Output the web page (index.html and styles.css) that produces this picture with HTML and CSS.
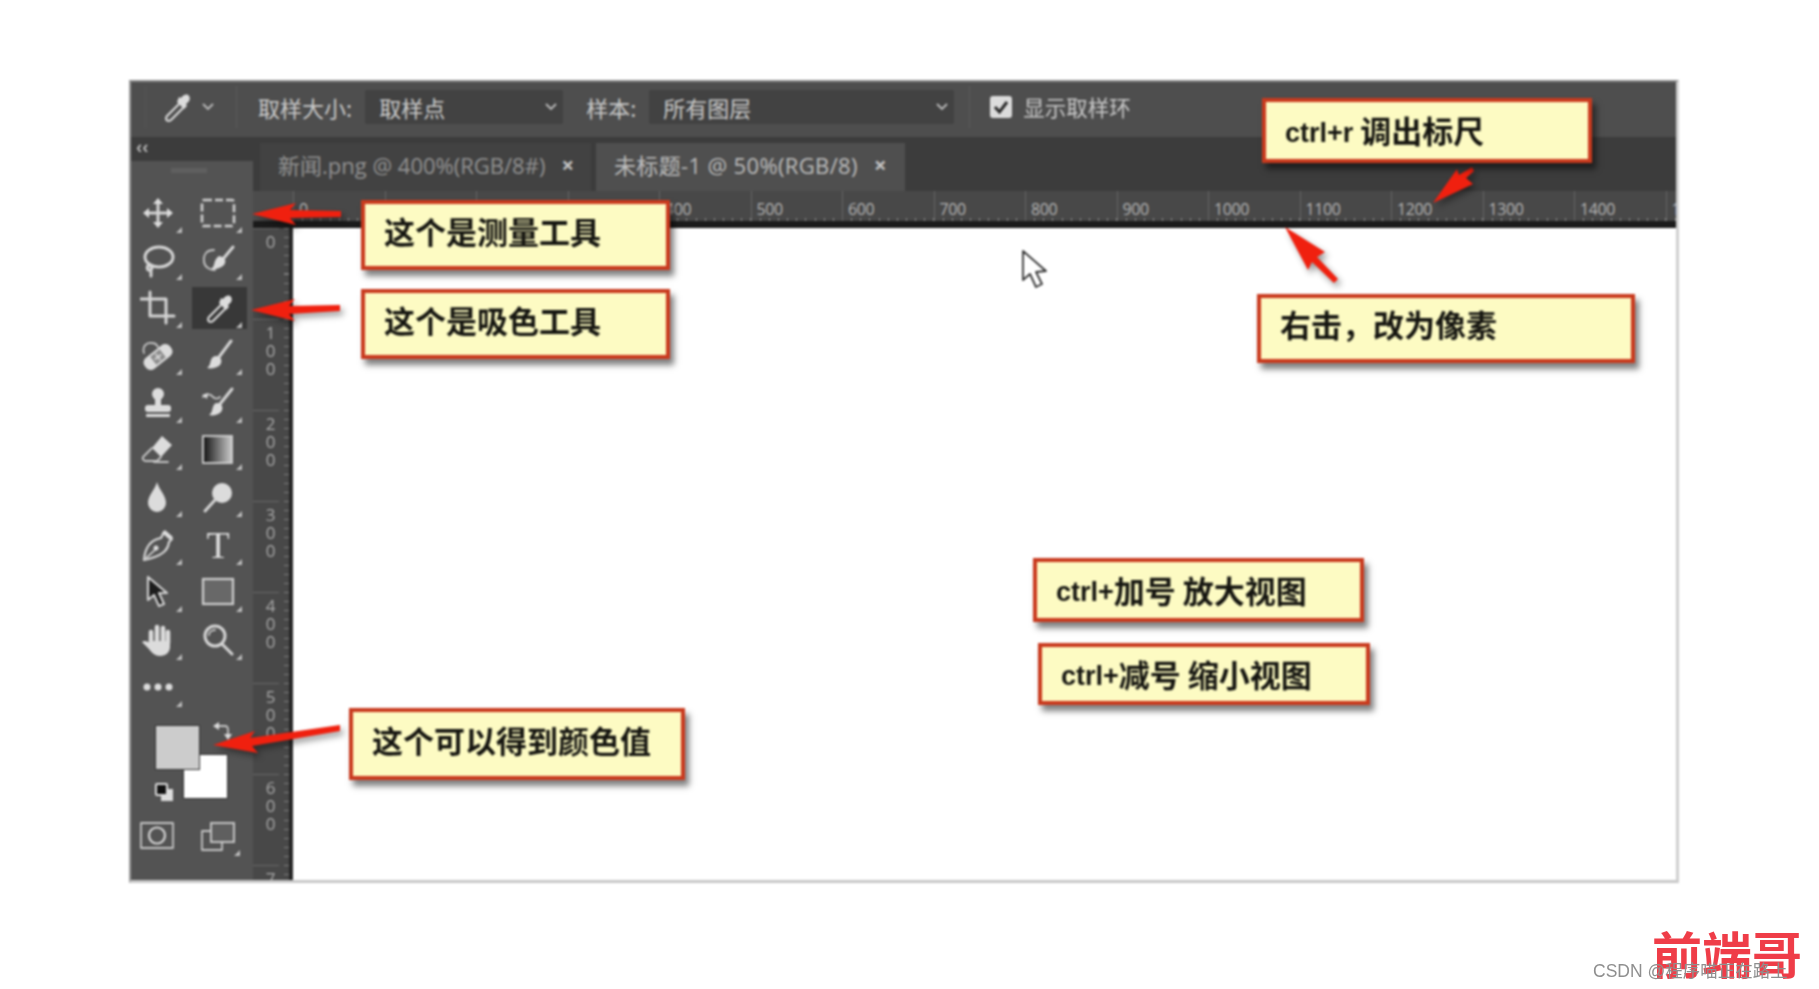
FILE: index.html
```html
<!DOCTYPE html>
<html lang="zh-CN">
<head>
<meta charset="utf-8">
<title>标尺与取色</title>
<link rel="stylesheet" href="styles.css">
</head>
<body>
<div class="soft">
<main class="window">
  <header class="options">
    <div class="opt-tool">
      <svg class="ic" viewBox="0 0 36 36"><path class="ln2" d="M20 14L7 27c-2 2-1 5 2 5 1 0 2-1 3-2L25 17"/><path class="fl" d="M17 13l7 7 3-3-1-2c3-2 5-5 3-8s-6-1-8 2l-2-1z"/></svg>
      <svg class="chev" viewBox="0 0 12 8"><path d="M1 1l5 5 5-5"/></svg>
    </div>
    <span class="opt-label first">取样大小:</span>
    <div class="select s1"><span>取样点</span><svg class="chev" viewBox="0 0 12 8"><path d="M1 1l5 5 5-5"/></svg></div>
    <span class="opt-label second">样本:</span>
    <div class="select s2"><span>所有图层</span><svg class="chev" viewBox="0 0 12 8"><path d="M1 1l5 5 5-5"/></svg></div>
    <div class="check"><svg viewBox="0 0 24 24"><rect class="cb" x="1" y="1" width="22" height="22" rx="3"/><path class="ck" d="M6 12l4.500 5L18 7"/></svg><span class="opt-label check-label">显示取样环</span></div>
  </header>

  <div class="main">
    <aside class="toolbar">
      <div class="tb-head"><span>‹‹</span></div>
      <div class="grip"></div>
      <div class="tools">
        <div class="tool"><svg class="ic" viewBox="0 0 36 36"><path class="ln" d="M18 6v24M6 18h24"/><path class="fl" d="M18 3l5 6H13zM18 33l5-6H13zM3 18l6-5v10zM33 18l-6-5v10z"/></svg></div>
        <div class="tool"><svg class="ic" viewBox="0 0 36 36"><rect class="dash" x="2" y="5" width="32" height="26" rx="2"/></svg></div>
        <div class="tool"><svg class="ic" viewBox="0 0 36 36"><ellipse class="ln" cx="19" cy="14" rx="14" ry="10"/><path class="ln" d="M9 21c-3 3-2 7 1 6s2-4 0-4M11 27v6"/></svg></div>
        <div class="tool"><svg class="ic" viewBox="0 0 36 36"><path class="ln1" d="M14 7C7 7 3 11 4 19c1 6 7 8 11 8"/><path class="ln" d="M33 4L23 16"/><path class="fl" d="M19 13c6 1 8 5 5 9-3 3-9 5-13 4 3-2 3-5 4-8 1-2 2-4 4-5z"/></svg></div>
        <div class="tool"><svg class="ic" viewBox="0 0 36 36"><path class="ln" d="M1 9h25v24M10 2v24h24"/></svg></div>
        <div class="tool active"><svg class="ic" viewBox="0 0 36 36"><path class="ln2" d="M20 14L7 27c-2 2-1 5 2 5 1 0 2-1 3-2L25 17"/><path class="fl" d="M17 13l7 7 3-3-1-2c3-2 5-5 3-8s-6-1-8 2l-2-1z"/></svg></div>
        <div class="tool"><svg class="ic" viewBox="0 0 36 36"><path class="ln1" d="M4 16c-2-6 2-11 8-10 3 0 5 2 6 4"/><g transform="rotate(-38 18 20)"><rect class="fl" x="2" y="13" width="32" height="14" rx="6"/><rect class="hole" x="12" y="15" width="12" height="10"/><path class="grid" d="M14 20h8M18 16v8"/></g></svg></div>
        <div class="tool"><svg class="ic" viewBox="0 0 36 36"><path class="ln" d="M31 4L19 20"/><path class="fl" d="M16 19c5 0 7 5 4 9-3 3-9 4-13 3 3-2 3-5 4-8 1-3 3-4 5-4z"/></svg></div>
        <div class="tool"><svg class="ic" viewBox="0 0 36 36"><circle class="fl" cx="18" cy="9" r="6"/><rect class="fl" x="15" y="13" width="6" height="8"/><rect class="fl" x="5" y="20" width="26" height="7" rx="3"/><rect class="fl" x="6" y="29" width="24" height="3" rx="1"/></svg></div>
        <div class="tool"><svg class="ic" viewBox="0 0 36 36"><path class="ln" d="M32 4L20 19"/><path class="fl" d="M17 18c5 0 7 5 4 9-3 3-8 4-12 3 3-2 3-5 4-8 1-3 2-4 4-4z"/><path class="ln1" d="M3 12c3-4 8-3 10 0 2 2 5 2 7 0"/><path class="fl" d="M2 10l6-2-1 6z"/></svg></div>
        <div class="tool"><svg class="ic" viewBox="0 0 36 36"><path class="fl" d="M22 4l10 9-11 12-9-9z"/><path class="ln1" d="M12 16L3 25c-1 2 0 3 2 4h12l4-4M14 30h14"/></svg></div>
        <div class="tool"><svg class="ic" viewBox="0 0 36 36"><defs><linearGradient id="gr" x1="0" x2="1" y1="0" y2="0"><stop offset="0" stop-color="#111"/><stop offset="1" stop-color="#ccc"/></linearGradient></defs><rect class="grad" x="3" y="4" width="29" height="27"/></svg></div>
        <div class="tool"><svg class="ic" viewBox="0 0 36 36"><path class="fl" d="M17 2c2 8 9 13 9 21a9 9 0 0 1-18 0c0-8 7-13 9-21z"/></svg></div>
        <div class="tool"><svg class="ic" viewBox="0 0 36 36"><circle class="fl" cx="22" cy="13" r="10"/><path class="ln" d="M15 20L5 31"/></svg></div>
        <div class="tool"><svg class="ic" viewBox="0 0 36 36"><path class="ln2" d="M24 5l8 7-3 3c-1 8-6 14-25 18 1-13 6-20 17-22z"/><path class="ln1" d="M5 32l11-10"/><circle class="fl" cx="16" cy="21" r="2.500"/><path class="fl" d="M25 3l8 7-3 3-8-7z"/></svg></div>
        <div class="tool"><svg class="ic" viewBox="0 0 36 36"><text class="glyph" x="18" y="31">T</text></svg></div>
        <div class="tool"><svg class="ic" viewBox="0 0 36 36"><path class="arrow" d="M8 3v23l6-5 5 11 5-2-5-11h8z"/></svg></div>
        <div class="tool"><svg class="ic" viewBox="0 0 36 36"><rect class="shape" x="3" y="5" width="30" height="25"/></svg></div>
        <div class="tool"><svg class="ic" viewBox="0 0 36 36"><path class="fl" d="M10 19h20v6c0 5-4 9-10 9-5 0-8-3-11-7l-7-7c2-2 5-1 8 1z"/><path class="fing" d="M11 21V10M17 20V5M23 20V6M28 21V10"/></svg></div>
        <div class="tool"><svg class="ic" viewBox="0 0 36 36"><circle class="ln" cx="15" cy="14" r="10"/><path class="ln1" d="M9 13c0-3 3-5 6-5"/><path class="ln" d="M22 22l10 10"/></svg></div>
        <div class="tool"><svg class="ic" viewBox="0 0 36 36"><circle class="fl" cx="7" cy="18" r="3.500"/><circle class="fl" cx="18" cy="18" r="3.500"/><circle class="fl" cx="29" cy="18" r="3.500"/></svg></div>
      </div>
      <div class="colors">
        <div class="bg-swatch"></div>
        <div class="fg-swatch"></div>
        <svg class="swap" viewBox="0 0 20 20"><path class="ln1" d="M4 5h9c2 0 3 2 3 4v6"/><path class="fl" d="M1 5l6-4v8zM12 13h8l-4 6z"/></svg>
        <div class="def-back"></div>
        <div class="def-front"></div>
      </div>
      <div class="modes">
        <svg class="ic mask" viewBox="0 0 36 36"><rect class="ln1" x="2" y="5" width="32" height="25"/><circle class="ln2" cx="18" cy="17.500" r="8"/></svg>
        <div class="mode-r"><svg class="ic" viewBox="0 0 36 36"><rect class="ln1" x="2" y="13" width="20" height="19"/><rect class="scr" x="11" y="5" width="23" height="19"/></svg></div>
      </div>
    </aside>

    <section class="doc">
      <nav class="tabs">
        <div class="tab off"><span class="tab-t">新闻.png @ 400%(RGB/8#)</span><b>×</b></div>
        <div class="tab on"><span class="tab-t">未标题-1 @ 50%(RGB/8)</span><b>×</b></div>
      </nav>
      <div class="hrule-row">
        <div class="corner"></div>
        <div class="hrule">
          <span>0</span><span>100</span><span>200</span><span>300</span><span>400</span><span>500</span><span>600</span><span>700</span><span>800</span><span>900</span><span>1000</span><span>1100</span><span>1200</span><span>1300</span><span>1400</span><span>1</span>
        </div>
      </div>
      <div class="work">
        <div class="vrule">
          <span>0</span><span>100</span><span>200</span><span>300</span><span>400</span><span>500</span><span>600</span><span>7</span>
        </div>
        <div class="canvas"></div>
      </div>
    </section>
  </div>
</main>

<svg class="overlay" viewBox="0 0 1819 989">
  <g class="arrows">
    <polygon points="252,214 296,203 290,210 341,211 341,217 290,218 296,225"/>
    <polygon points="251,310 295,299 289,306 340,305 340,311 289,314 295,321"/>
    <polygon points="213,745 255,731 250,738 340,725 340,731 252,746 258,753"/>
    <polygon points="1433,203 1457,169 1459,175 1472,167 1474,171 1466,178 1473,184"/>
    <polygon points="1285,227 1325,252 1317,257 1338,279 1334,283 1312,262 1308,270"/>
  </g>
  <path class="cursor" d="M1023 251v29l7-6 6 13 6-3-6-12 10-1z"/>
</svg>

<div class="callout c1">这个是测量工具</div>
<div class="callout c2">这个是吸色工具</div>
<div class="callout c3">这个可以得到颜色值</div>
<div class="callout c4"><span class="lat">ctrl+r</span>&nbsp;调出标尺</div>
<div class="callout c5">右击，改为像素</div>
<div class="callout c6"><span class="lat">ctrl+</span>加号 放大视图</div>
<div class="callout c7"><span class="lat">ctrl+</span>减号 缩小视图</div>
</div>

<div class="mark-cn">前端哥</div>
<div class="mark-csdn">CSDN @程序喵正在路上</div>
</body>
</html>
```
FILE: styles.css
```css
html, body { margin: 0; padding: 0; background: #fff; }
body { width: 1819px; height: 989px; overflow: hidden; position: relative; font-family: "Liberation Sans", "Noto Sans CJK SC", sans-serif; }
.soft { filter: blur(0.9px); width: 1819px; height: 989px; }

.window { width: 1550px; height: 803px; margin: 0 0 0 129px; position: relative; top: 80px; box-sizing: border-box; border-right: 3px solid #cfcfcf; border-bottom: 3px solid #c8c8c8; border-left: 2px solid #9a9a9a; border-top: 2px solid #8a8a8a; display: flex; flex-direction: column; background: #535353; }

/* options bar */
.options { height: 55px; flex: none; box-sizing: border-box; padding-bottom: 5px; background: #4e4e4e; display: flex; align-items: center; color: #c9c9c9; font-family: "Noto Sans CJK SC", sans-serif; font-size: 22px; }
.opt-tool { display: flex; align-items: center; width: 92px; height: 42px; margin-left: 14px; box-sizing: border-box; padding-left: 14px; border-left: 1px solid #555; border-right: 1px solid #5a5a5a; gap: 6px; }
.opt-label { white-space: nowrap; line-height: 1; }
.first { margin-left: 21px; }
.second { margin-left: 23px; }
.select { height: 34px; background: #424242; border-radius: 2px; display: flex; align-items: center; justify-content: space-between; box-sizing: border-box; padding: 0 6px 0 14px; }
.s1 { width: 198px; margin-left: 13px; }
.s2 { width: 305px; margin-left: 13px; }
.chev { width: 12px; height: 8px; fill: none; stroke: #bbb; stroke-width: 1.8; }
.check { display: flex; align-items: center; margin-left: 15px; padding-left: 19px; height: 42px; border-left: 1px solid #5a5a5a; gap: 10px; }
.check svg { width: 24px; height: 24px; }
.check-label { font-size: 21.500px; }
.cb { fill: #dcdcdc; }
.ck { fill: none; stroke: #2a2a2a; stroke-width: 3; }

/* shared icon styles */
.ic { width: 36px; height: 36px; display: block; }
.ln { fill: none; stroke: #d4d4d4; stroke-width: 3; stroke-linecap: round; stroke-linejoin: round; }
.ln1 { fill: none; stroke: #c4c4c4; stroke-width: 1.8; stroke-linecap: round; stroke-linejoin: round; }
.ln2 { fill: none; stroke: #d6d6d6; stroke-width: 2.2; stroke-linejoin: round; }
.fl { fill: #dcdcdc; }
.dash { fill: none; stroke: #cfcfcf; stroke-width: 2.6; stroke-dasharray: 8 3; }
.hole { fill: #8d8d8d; }
.grid { fill: none; stroke: #dedede; stroke-width: 1.500; }
.grad { fill: url(#gr); stroke: #d2d2d2; stroke-width: 1.800; }
.glyph { font-family: "Liberation Serif", serif; font-size: 38px; fill: #dedede; text-anchor: middle; }
.arrow { fill: #1c1c1c; stroke: #cfcfcf; stroke-width: 2.200; stroke-linejoin: round; }
.shape { fill: #686868; stroke: #cfcfcf; stroke-width: 2.200; }
.fing { fill: none; stroke: #dcdcdc; stroke-width: 4.500; stroke-linecap: round; }
.scr { fill: #5f5f5f; stroke: #cfcfcf; stroke-width: 1.800; }

/* main area */
.main { flex: 1; display: flex; min-height: 0; }
.toolbar { width: 122px; flex: none; background: #535353; display: flex; flex-direction: column; }
.tb-head { height: 24px; flex: none; background: #3c3c3c; color: #b5b5b5; font-size: 19px; line-height: 19px; padding-left: 5px; font-weight: 700; }
.grip { width: 36px; height: 5px; background: #5f5f5f; margin: 7px 0 0 40px; flex: none; }
.tools { display: grid; grid-template-columns: 60px 60px; grid-auto-rows: 47.4px; margin: 16.6px 0 0 -3px; flex: none; }
.tool { position: relative; display: flex; align-items: center; justify-content: center; }
.tool::after { content: ""; position: absolute; right: 6px; bottom: 4px; border-style: solid; border-width: 0 0 6px 6px; border-color: transparent transparent #bdbdbd transparent; }
.tool.active { background: #383838; background-clip: content-box; padding: 3px 1px 3px 4px; box-sizing: border-box; }
.colors { position: relative; height: 92px; margin-top: 6px; flex: none; }
.fg-swatch { position: absolute; left: 24px; top: 8px; width: 45px; height: 45px; background: #cccccc; border: 1px solid #333; box-sizing: border-box; }
.bg-swatch { position: absolute; left: 52px; top: 37px; width: 45px; height: 45px; background: #fff; border: 1px solid #333; box-sizing: border-box; }
.swap { position: absolute; left: 81px; top: 4px; width: 20px; height: 20px; }
.def-back { position: absolute; left: 30px; top: 72px; width: 12px; height: 12px; background: #ddd; }
.def-front { position: absolute; left: 24px; top: 66px; width: 13px; height: 13px; background: #111; border: 2px solid #ddd; box-sizing: border-box; border-radius: 2px; }
.modes { display: flex; align-items: center; margin-top: 9px; padding-left: 8px; gap: 25px; flex: none; }
.mode-r { position: relative; }
.mode-r::after { content: ""; position: absolute; right: -4px; bottom: -2px; border-style: solid; border-width: 0 0 6px 6px; border-color: transparent transparent #bdbdbd transparent; }

/* document */
.doc { flex: 1; min-width: 0; display: flex; flex-direction: column; }
.tabs { height: 54px; flex: none; background: #3c3c3c; display: flex; align-items: flex-end; padding-left: 7px; gap: 5px; color: #929292; font-size: 22px; font-family: "Open Sans", "Noto Sans CJK SC", sans-serif; }
.tab { height: 48px; display: flex; align-items: center; box-sizing: border-box; white-space: nowrap; padding-bottom: 6px; }
.tab b { font-size: 22px; font-weight: 700; color: #c4c4c4; }
.off { width: 331px; background: #424242; padding-left: 18px; gap: 16px; }
.on { width: 309px; background: #4f4f4f; padding-left: 18px; gap: 16px; color: #bdbdbd; }
.on .tab-t { letter-spacing: 0.35px; }
.hrule-row { height: 37px; flex: none; display: flex; background: #484848; border-bottom: 7px solid #1b1b1b; box-sizing: border-box; }
.corner { width: 40px; flex: none; background: #4c4c4c; }
.hrule { flex: 1; min-width: 0; display: flex; overflow: hidden; background-image: repeating-linear-gradient(90deg, #8a8a8a 0 1px, transparent 1px 9.15px); background-size: 100% 3px; background-position: 0 100%; background-repeat: no-repeat; }
.hrule span { flex: none; width: 91.500px; box-sizing: border-box; border-left: 1px solid #666; padding-left: 5px; color: #b5b5b5; font-family: "Open Sans", sans-serif; font-size: 16px; line-height: 37px; letter-spacing: -0.4px; }
.work { flex: 1; min-height: 0; display: flex; }
.vrule { width: 40px; flex: none; background-color: #484848; border-right: 4px solid #262626; box-sizing: border-box; overflow: hidden; background-image: repeating-linear-gradient(180deg, #7c7c7c 0 1px, transparent 1px 9.1px); background-size: 5px 100%; background-position: 100% 0; background-repeat: no-repeat; }
.vrule span { display: block; height: 91px; box-sizing: border-box; border-top: 1px solid #686868; padding: 1px 0 0 8px; color: #a9a9a9; font-family: "Open Sans", sans-serif; font-size: 17px; line-height: 18px; letter-spacing: -5px; writing-mode: vertical-rl; text-orientation: upright; }
.canvas { flex: 1; background: #fff; }

/* overlays */
.overlay { position: absolute; left: 0; top: 0; width: 1819px; height: 989px; pointer-events: none; }
.arrows polygon { fill: #f0200f; }
.arrows { filter: drop-shadow(3px 4px 3px rgba(0, 0, 0, 0.4)); }
.cursor { fill: #fff; stroke: #333; stroke-width: 1.8; stroke-linejoin: round; }

.callout { position: absolute; box-sizing: border-box; display: flex; align-items: center; padding: 0 0 10px 19px; background: #fdfbc3; border: 4px solid #c93a1e; box-shadow: 4px 6px 6px rgba(0, 0, 0, 0.5), inset 0 0 0 1px #fff0c0; color: #151510; font-family: "Noto Sans CJK SC", sans-serif; font-weight: 700; font-size: 31px; white-space: pre; }
.lat { font-family: "Liberation Sans", sans-serif; font-size: 27px; margin-top: 7px; }
.c1 { left: 361px; top: 200px; width: 309px; height: 70px; }
.c2 { left: 361px; top: 289px; width: 309px; height: 70px; }
.c3 { left: 349px; top: 708px; width: 336px; height: 72px; }
.c4 { left: 1262px; top: 98px; width: 330px; height: 65px; padding-bottom: 2px; }
.c5 { left: 1257px; top: 294px; width: 378px; height: 69px; }
.c6 { left: 1033px; top: 558px; width: 331px; height: 64px; padding-bottom: 2px; }
.c7 { left: 1038px; top: 643px; width: 332px; height: 62px; padding-bottom: 2px; }

.mark-cn { position: absolute; left: 1652px; top: 916px; font-family: "Noto Sans CJK SC", sans-serif; font-weight: 700; font-size: 50px; line-height: 72px; color: #ef3d48; white-space: nowrap; }
.mark-csdn { position: absolute; left: 1593px; top: 959px; font-family: "Liberation Sans", "Noto Sans CJK SC", sans-serif; font-size: 17.500px; line-height: 24px; color: #8f8f8f; white-space: nowrap; }
```
